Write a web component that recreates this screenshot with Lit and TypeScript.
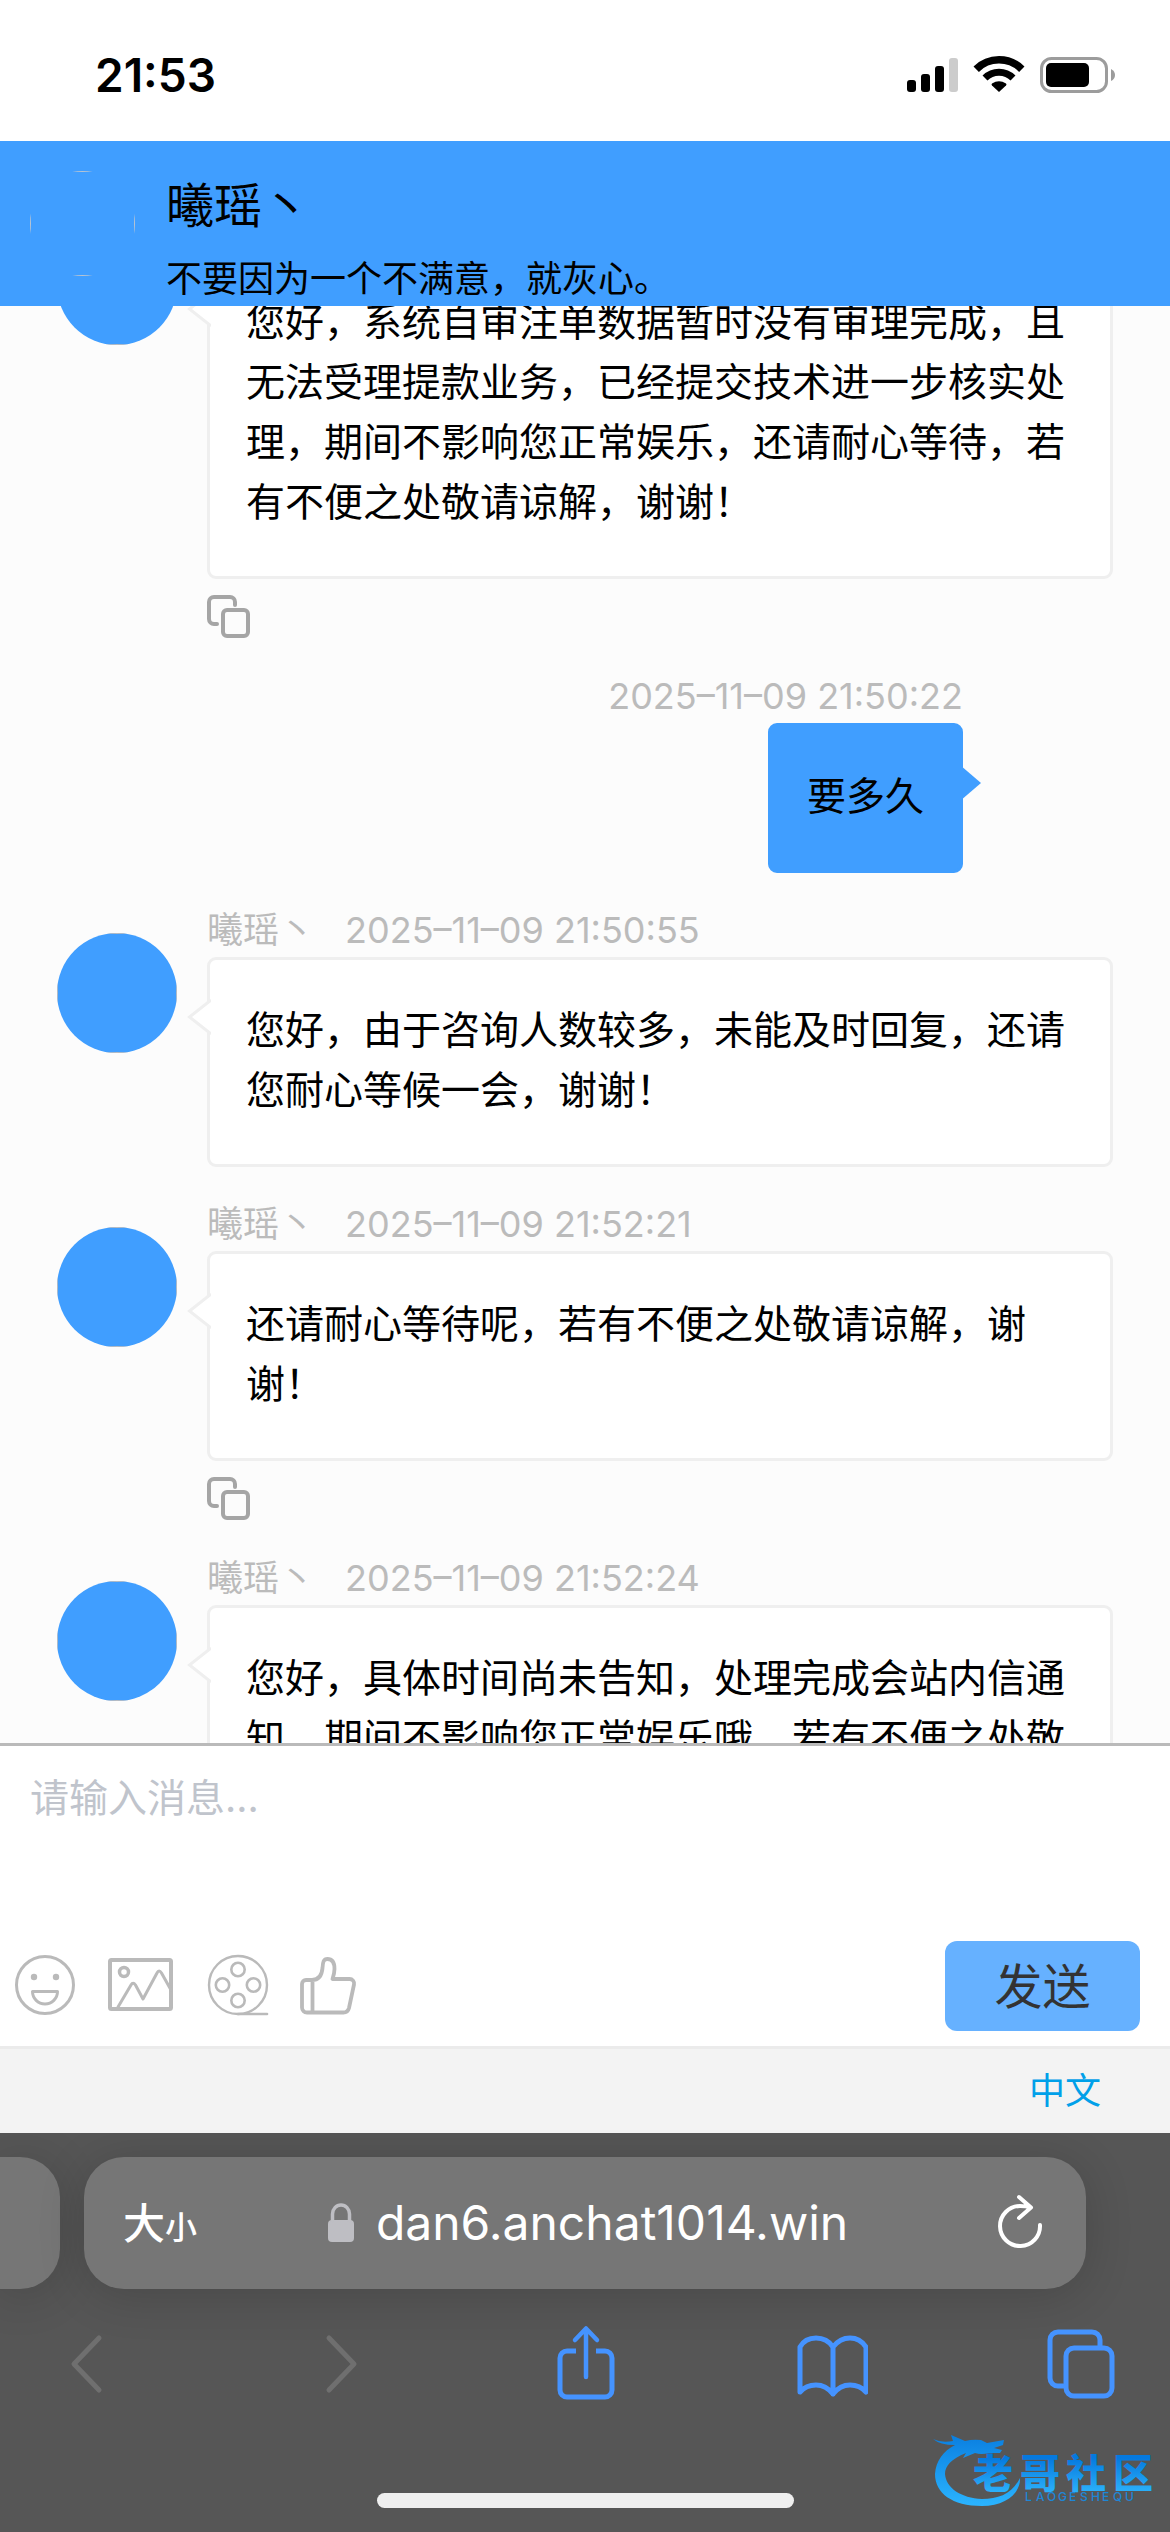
import { LitElement, html, css, svg, nothing } from "lit";
import { customElement, property, query } from "lit/decorators.js";

interface Message {
  own?: boolean;
  time: string;
  text: string;
  copy?: boolean;
}

const AGENT = "曦瑶丶";

const MESSAGES: Message[] = [
  {
    time: "2025–11–09 21:50:12",
    text: "您好，系统自审注单数据暂时没有审理完成，且无法受理提款业务，已经提交技术进一步核实处理，期间不影响您正常娱乐，还请耐心等待，若有不便之处敬请谅解，谢谢！",
    copy: true,
  },
  { own: true, time: "2025–11–09 21:50:22", text: "要多久" },
  {
    time: "2025–11–09 21:50:55",
    text: "您好，由于咨询人数较多，未能及时回复，还请您耐心等候一会，谢谢！",
  },
  {
    time: "2025–11–09 21:52:21",
    text: "还请耐心等待呢，若有不便之处敬请谅解，谢谢！",
    copy: true,
  },
  {
    time: "2025–11–09 21:52:24",
    text: "您好，具体时间尚未告知，处理完成会站内信通知，期间不影响您正常娱乐哦，若有不便之处敬",
  },
];

const ICONS = {
  copy: svg`<path d="M10 29H7a5 5 0 0 1-5-5V7a5 5 0 0 1 5-5h16a5 5 0 0 1 5 5v3"/><rect x="16" y="15" width="25" height="26" rx="4"/>`,
  smile: svg`<circle cx="33" cy="33" r="28.5"/><circle cx="22" cy="25" r="3.2" fill="currentColor" stroke="none"/><circle cx="44" cy="25" r="3.2" fill="currentColor" stroke="none"/><path d="M20.500 39.500h25a12.500 12.500 0 0 1-25 0z"/>`,
  image: svg`<rect x="2" y="8" width="61" height="49" rx="1.500" stroke-width="4"/><circle cx="16" cy="20" r="4.500" stroke-width="3.500"/><path d="M10 55L23 33q2-3.500 4.500 0L35 47L49 21q2-4 4.500 0L63 38"/>`,
  film: svg`<circle cx="34" cy="33" r="29" stroke-width="2.400"/><g stroke-width="2.600"><circle cx="34" cy="17.500" r="6.700"/><circle cx="34" cy="48.500" r="6.700"/><circle cx="18.500" cy="33" r="6.700"/><circle cx="49.500" cy="33" r="6.700"/><path d="M34 62h29"/></g>`,
  thumb: svg`<path stroke-width="3.800" d="M2 32a4 4 0 0 1 4-4h6c8 0 10-6 10.500-12 .3-6 1-9 5-9 5 0 7 4 7 10 0 4-1 7-2 10h17a4.500 4.500 0 0 1 4.500 5.500l-5 23.500a6 6 0 0 1-6 4.500H7a5 5 0 0 1-5-5zM12.500 28v32"/>`,
};

@customElement("chat-message")
class ChatMessage extends LitElement {
  @property({ attribute: false }) message!: Message;

  static styles = css`
    :host {
      display: block;
    }
    .row {
      display: flex;
      gap: 30px;
      padding: 0 57px;
    }
    .row.own {
      justify-content: flex-end;
      padding-right: 207px;
    }
    .avatar {
      flex: none;
      box-sizing: border-box;
      width: 120px;
      height: 120px;
      margin-top: 30px;
      border-radius: 50%;
      overflow: hidden;
      background: #409eff;
    }
    .avatar-edge {
      box-sizing: border-box;
      width: 100%;
      height: 100%;
      border: 1px solid #b8bcc2;
    }
    .body {
      flex: 1;
      min-width: 0;
    }
    .own .body {
      flex: none;
    }
    .meta {
      display: flex;
      gap: 30px;
      height: 54px;
      line-height: 54px;
      font-size: 36px;
      color: #bbb;
      white-space: nowrap;
    }
    .own .meta {
      justify-content: flex-end;
    }
    .bubble {
      position: relative;
      border: 3px solid #efefef;
      border-radius: 9px;
      padding: 40px 36px 44px;
      background: #fff;
      font-size: 39px;
      line-height: 60px;
    }
    .own .bubble {
      width: fit-content;
      margin-left: auto;
      border-color: #409eff;
      background: #409eff;
    }
    .text {
      margin: 0;
    }
    .tail {
      position: absolute;
      top: 39px;
      left: -23px;
      width: 24px;
      height: 36px;
    }
    .own .tail {
      left: auto;
      right: -21px;
    }
    .copy {
      display: block;
      height: 60px;
      padding: 16px 0 1px;
      border: 0;
      background: none;
      color: #a5a5a5;
    }
    .copy svg {
      display: block;
      width: 43px;
      height: 43px;
      fill: none;
      stroke: currentColor;
      stroke-width: 4;
      stroke-linecap: round;
    }
  `;

  render() {
    const m = this.message;
    return html`
      <article class="row ${m.own ? "own" : ""}">
        ${m.own ? nothing : html`<div class="avatar"><div class="avatar-edge"></div></div>`}
        <div class="body">
          <div class="meta">
            ${m.own ? nothing : html`<span>${AGENT}</span>`}
            <time>${m.time}</time>
          </div>
          <div class="bubble">
            ${m.own
              ? html`<svg class="tail" viewBox="0 0 24 36" aria-hidden="true">
                  <path d="M3 0v36l21-18z" fill="#409eff" />
                </svg>`
              : html`<svg class="tail" viewBox="0 0 24 36" aria-hidden="true">
                  <path d="M24 1L2.500 18L24 35" fill="#fff" stroke="#efefef" stroke-width="3" />
                </svg>`}
            <p class="text">${m.text}</p>
          </div>
          ${m.copy
            ? html`<button class="copy" aria-label="复制">
                <svg viewBox="0 0 43 43">${ICONS.copy}</svg>
              </button>`
            : nothing}
        </div>
      </article>
    `;
  }
}

@customElement("status-bar")
class StatusBar extends LitElement {
  static styles = css`
    :host {
      display: flex;
      flex: none;
      justify-content: space-between;
      align-items: center;
      box-sizing: border-box;
      height: 141px;
      padding: 8px 54px 0 95px;
      background: #fff;
    }
    .clock {
      font-size: 46px;
      font-weight: 600;
      line-height: 60px;
      color: #000;
    }
    .icons {
      width: 210px;
      height: 42px;
    }
  `;

  render() {
    return html`
      <time class="clock">21:53</time>
      <svg class="icons" viewBox="906 53 210 42" aria-hidden="true">
        <rect x="907" y="79" width="9" height="12" rx="3" />
        <rect x="921" y="73" width="9" height="18" rx="3" />
        <rect x="935" y="65" width="9" height="26" rx="3" />
        <rect x="949" y="57" width="9" height="34" rx="3" fill="#ccc" />
        <g fill="none" stroke="#000">
          <path d="M976.200 68.200A32.200 32.200 0 0 1 1021.800 68.200" stroke-width="7.600" />
          <path d="M985 77A19.800 19.800 0 0 1 1013 77" stroke-width="7" />
        </g>
        <path d="M999 91L992 84.500q-1-1 0-2Q999 78 1006 82.500q1 1 0 2z" />
        <rect x="1041.500" y="57.500" width="65" height="33" rx="10" fill="none" stroke="#9c9c9c" stroke-width="3" />
        <rect x="1046" y="62" width="43" height="24" rx="5" />
        <path d="M1111 68q4 2 4 6t-4 6z" fill="#9c9c9c" />
      </svg>
    `;
  }
}

@customElement("browser-bar")
class BrowserBar extends LitElement {
  static styles = css`
    :host {
      position: relative;
      display: flex;
      flex: none;
      flex-direction: column;
      align-items: center;
      overflow: hidden;
      background: #565656;
      color: #fff;
    }
    button,
    a {
      padding: 0;
      border: 0;
      background: none;
      color: inherit;
      font: inherit;
      text-decoration: none;
    }
    svg {
      display: block;
      fill: none;
      stroke: currentColor;
      stroke-width: 5;
      stroke-linecap: round;
      stroke-linejoin: round;
    }
    .tabs {
      display: flex;
      align-self: stretch;
      gap: 24px;
      padding: 24px 84px 24px 0;
    }
    .previous,
    .address {
      box-sizing: border-box;
      height: 132px;
      background: #767676;
      box-shadow: 0 6px 48px rgba(0, 0, 0, 0.16);
    }
    .previous {
      flex: none;
      width: 60px;
      border-radius: 0 40px 40px 0;
    }
    .address {
      display: flex;
      flex: 1;
      align-items: center;
      justify-content: space-between;
      padding: 0 42px 0 39px;
      border-radius: 40px;
    }
    .size {
      display: flex;
      align-items: baseline;
      padding-top: 6px;
      font-weight: 500;
      line-height: 60px;
    }
    .size-large {
      font-size: 42px;
    }
    .size-small {
      font-size: 32px;
    }
    .site {
      display: flex;
      align-items: center;
      gap: 21px;
      padding-right: 18px;
      font-size: 48px;
      line-height: 60px;
    }
    .lock {
      width: 28px;
      height: 40px;
      color: #bebec3;
    }
    .reload {
      width: 48px;
      height: 58px;
    }
    .actions {
      display: flex;
      align-self: stretch;
      justify-content: space-between;
      padding: 12px 53px 0 50px;
      color: #4593ff;
    }
    .actions svg {
      width: 72px;
      height: 78px;
    }
    .actions .back,
    .actions .forward {
      color: #6f6f6f;
    }
    .home {
      width: 417px;
      height: 15px;
      margin: 90px 0 24px;
      border-radius: 8px;
      background: #efefef;
    }
    .brand {
      position: absolute;
      right: 13px;
      bottom: 18px;
      width: 224px;
      height: 86px;
    }
    .brand svg {
      width: 224px;
      height: 86px;
      stroke: none;
    }
    .brand-name {
      font-size: 40px;
      font-weight: 900;
    }
    .brand-latin {
      font-size: 12px;
      font-weight: 500;
    }
  `;

  render() {
    return html`
      <div class="tabs">
        <div class="previous"></div>
        <div class="address">
          <button class="size"><span class="size-large">大</span><span class="size-small">小</span></button>
          <a class="site" href="#">
            <svg class="lock" viewBox="0 0 28 40">
              <rect x="1" y="17" width="26" height="22" rx="4" fill="currentColor" stroke="none" />
              <path d="M5.500 18v-7a8.500 9 0 0 1 17 0v7" stroke-width="3.500" />
            </svg>
            <span>dan6.anchat1014.win</span>
          </a>
          <button class="reload" aria-label="刷新">
            <svg viewBox="0 0 48 58" width="48" height="58">
              <path d="M34.500 13.500Q30 12 24 12A20 20 0 1 0 44 31M23 3L35 13.500L23 24" stroke-width="4" />
            </svg>
          </button>
        </div>
      </div>
      <div class="actions">
        <button aria-label="后退">
          <svg class="back" viewBox="0 0 72 78"><path d="M49 13L24 39L49 65" /></svg>
        </button>
        <button aria-label="前进">
          <svg class="forward" viewBox="0 0 72 78"><path d="M30 13L55 39L30 65" /></svg>
        </button>
        <button aria-label="分享">
          <svg viewBox="0 0 72 78">
            <path d="M28 26H19a7 7 0 0 0-7 7v32a7 7 0 0 0 7 7h38a7 7 0 0 0 7-7V33a7 7 0 0 0-7-7h-9" stroke-linecap="butt" />
            <path d="M38 52V4M27 15L38 3.500L49 15" stroke-width="4.500" />
          </svg>
        </button>
        <button aria-label="书签">
          <svg viewBox="0 0 72 78">
            <path d="M37 69V22Q31 13 20 13T4 22V67Q10 60 20 60T37 69Q44 60 54 60T70 67V22Q64 13 54 13T37 22" />
          </svg>
        </button>
        <button aria-label="标签页">
          <svg viewBox="0 0 72 78">
            <path d="M18 61H13a8 8 0 0 1-8-8V15a8 8 0 0 1 8-8h34a8 8 0 0 1 8 8v7" />
            <rect x="21" y="23" width="46" height="48" rx="8" />
          </svg>
        </button>
      </div>
      <div class="home"></div>
      <div class="brand">
        <svg viewBox="0 0 224 86">
          <defs>
            <linearGradient id="ring" x1="0" y1="0" x2="0" y2="1">
              <stop offset="0" stop-color="#0a7fe0" />
              <stop offset="1" stop-color="#2bb4ff" />
            </linearGradient>
            <linearGradient id="name" gradientUnits="userSpaceOnUse" x1="0" y1="30" x2="0" y2="64">
              <stop offset="0" stop-color="#0579df" />
              <stop offset="1" stop-color="#2bb0fa" />
            </linearGradient>
          </defs>
          <path
            d="M0 11Q8 15 20 13L18 7L32 13Q40 11 48 12L54 15L71 12L70 17L61 20L69 22L67 25L56 25Q48 27 42 25L30 30L33 25C18 31 12 38 12 46C13 60 28 70 49 71C66 71 79 66 87 50C88 65 72 78 49 78C19 78 2 65 2 46C3 33 10 23 22 17Q7 17 0 11z"
            fill="url(#ring)"
          />
          <text class="brand-name" x="40 87 133 180" y="60" fill="url(#name)">老哥社区</text>
          <text class="brand-latin" x="92 103 114 125 136 147 158 169 180 192" y="73" fill="#1e86d6">LAOGESHEQU</text>
        </svg>
      </div>
    `;
  }
}

@customElement("app-root")
class AppRoot extends LitElement {
  @query(".messages") private list!: HTMLElement;

  static styles = css`
    :host {
      display: flex;
      flex-direction: column;
      height: 100vh;
      overflow: hidden;
      background: #fff;
      color: #000;
      font-family: Inter, "Noto Sans CJK SC", sans-serif;
    }
    .header {
      display: flex;
      flex: none;
      gap: 31px;
      padding: 30px 30px 0;
      background: #409eff;
    }
    .portrait {
      flex: none;
      width: 105px;
      height: 105px;
      border-radius: 50%;
      overflow: hidden;
    }
    .portrait-edge {
      box-sizing: border-box;
      height: 100%;
      border: 1px solid #b8c4d2;
    }
    .title {
      margin: 0 0 12px;
      font-size: 48px;
      font-weight: 400;
      line-height: 69px;
    }
    .motto {
      margin: 0;
      font-size: 36px;
      line-height: 54px;
    }
    .messages {
      display: flex;
      flex: 1;
      flex-direction: column;
      gap: 30px;
      min-height: 0;
      box-sizing: border-box;
      padding: 30px 0;
      overflow-y: auto;
      scrollbar-width: none;
      background: #fcfcfc;
    }
    .messages chat-message {
      flex: none;
    }
    .composer {
      flex: none;
      border-top: 3px solid #bababa;
      background: #fff;
    }
    .input {
      display: block;
      box-sizing: border-box;
      width: 100%;
      height: 195px;
      padding: 22px 30px;
      border: 0;
      outline: 0;
      resize: none;
      background: none;
      font: inherit;
      font-size: 39px;
      line-height: 60px;
    }
    .input::placeholder {
      color: #c0c4cc;
      opacity: 1;
    }
    .tools {
      display: flex;
      align-items: center;
      gap: 30px;
      padding: 0 30px 15px 12px;
    }
    .tool {
      padding: 0 0 3px;
      border: 0;
      background: none;
      color: #bababa;
    }
    .tool svg {
      display: block;
      width: 66px;
      height: 66px;
      fill: none;
      stroke: currentColor;
      stroke-width: 3;
      stroke-linecap: round;
      stroke-linejoin: round;
    }
    .send {
      width: 195px;
      height: 90px;
      margin-left: auto;
      padding: 0 0 6px;
      border: 0;
      border-radius: 12px;
      background: #66b1ff;
      color: #333;
      font: inherit;
      font-size: 48px;
    }
    .language {
      display: flex;
      flex: none;
      justify-content: flex-end;
      padding: 0 69px;
      border-top: 3px solid #ebebeb;
      background: #f3f3f3;
      font-size: 36px;
      line-height: 84px;
    }
    .language a {
      color: #00a0e9;
      text-decoration: none;
    }
  `;

  async firstUpdated() {
    await Promise.all(
      [...this.list.querySelectorAll<ChatMessage>("chat-message")].map((m) => m.updateComplete),
    );
    this.list.scrollTop = 141;
  }

  private tool(label: string, icon: unknown) {
    return html`<button class="tool" type="button" aria-label=${label}>
      <svg viewBox="0 0 66 66">${icon}</svg>
    </button>`;
  }

  render() {
    return html`
      <status-bar></status-bar>
      <header class="header">
        <div class="portrait"><div class="portrait-edge"></div></div>
        <div>
          <h1 class="title">${AGENT}</h1>
          <p class="motto">不要因为一个不满意，就灰心。</p>
        </div>
      </header>
      <main class="messages">
        ${MESSAGES.map((m) => html`<chat-message .message=${m}></chat-message>`)}
      </main>
      <form class="composer" @submit=${(e: Event) => e.preventDefault()}>
        <textarea class="input" aria-label="消息" placeholder="请输入消息..."></textarea>
        <div class="tools">
          ${this.tool("表情", ICONS.smile)} ${this.tool("图片", ICONS.image)}
          ${this.tool("视频", ICONS.film)} ${this.tool("评价", ICONS.thumb)}
          <button class="send">发送</button>
        </div>
      </form>
      <nav class="language"><a href="#">中文</a></nav>
      <browser-bar></browser-bar>
    `;
  }
}
